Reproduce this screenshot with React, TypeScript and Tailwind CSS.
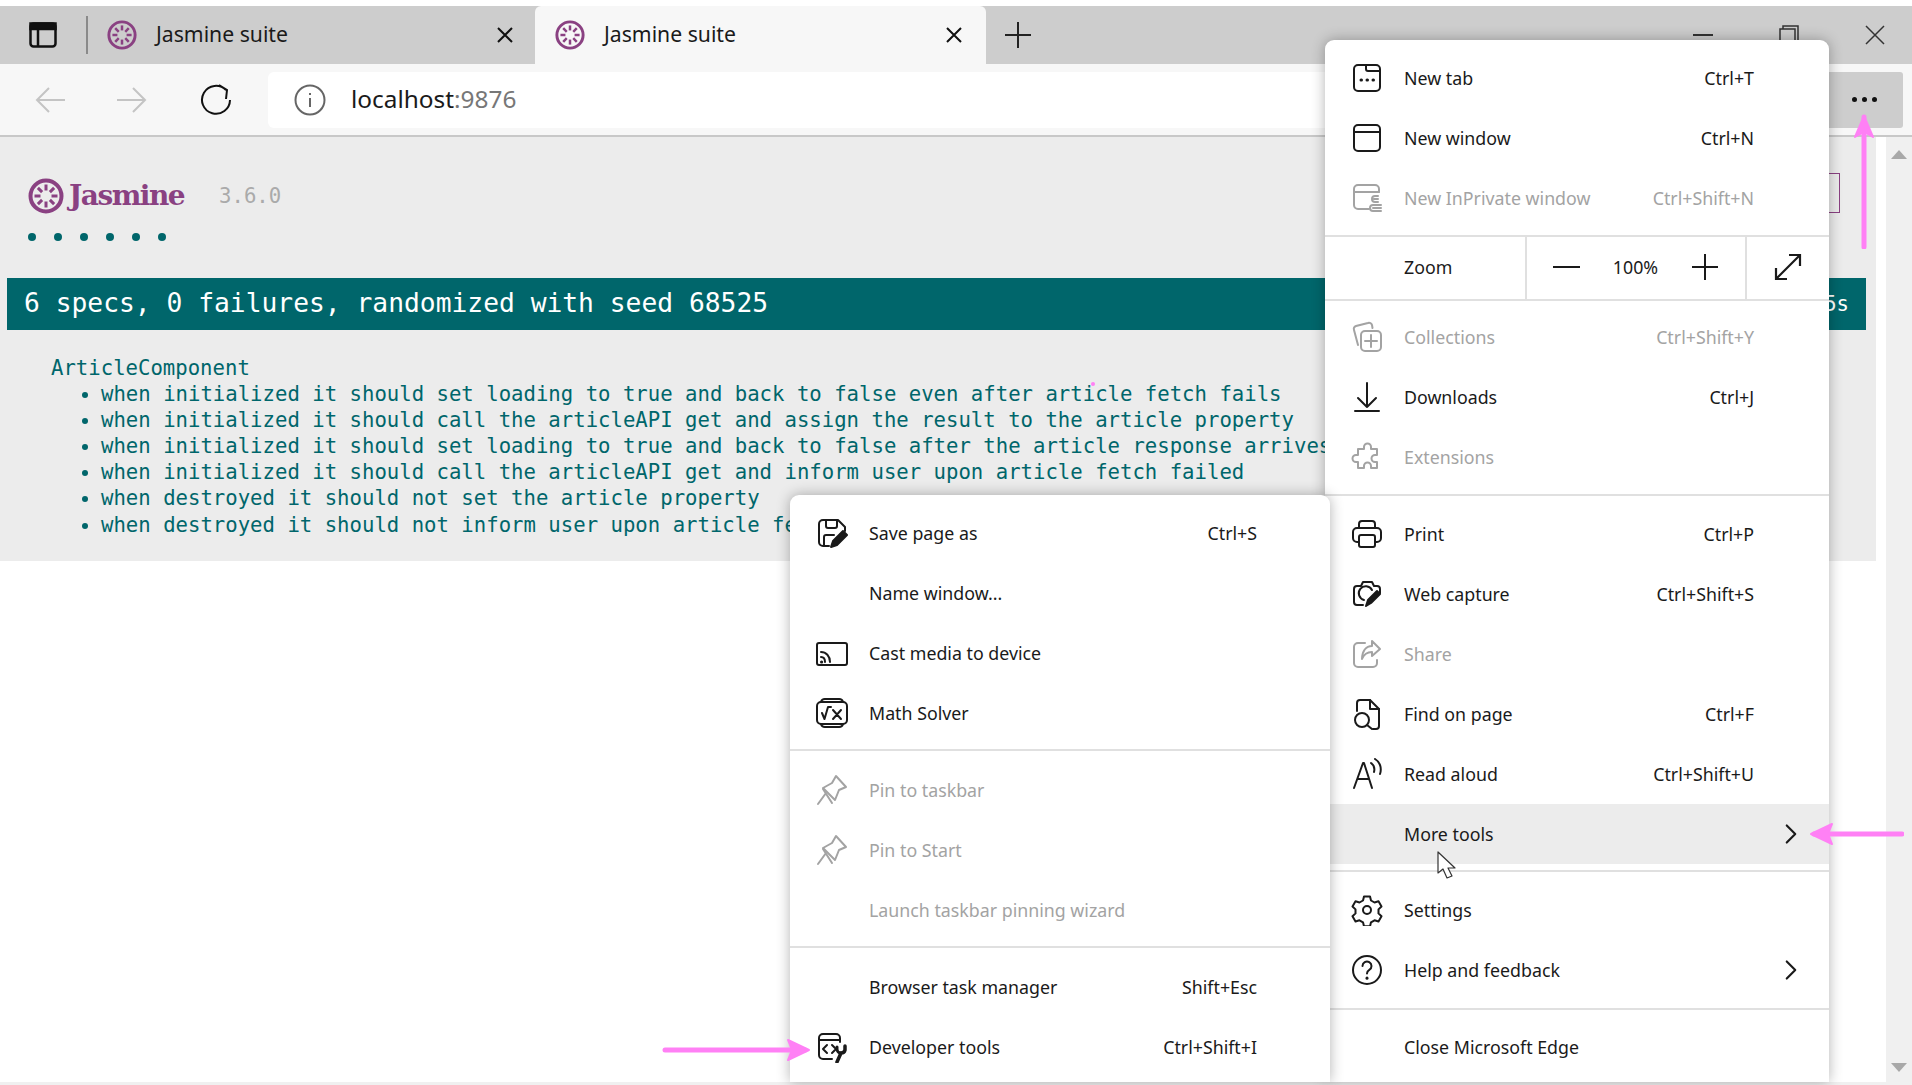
import type { ReactNode } from 'react';
import { ChevronRight } from 'lucide-react';

const mono = "font-['DejaVu_Sans_Mono',monospace]";
const ui = "font-['Noto_Sans',sans-serif]";

const specs = [
  'when initialized it should set loading to true and back to false even after article fetch fails',
  'when initialized it should call the articleAPI get and assign the result to the article property',
  'when initialized it should set loading to true and back to false after the article response arrives',
  'when initialized it should call the articleAPI get and inform user upon article fetch failed',
  'when destroyed it should not set the article property',
  'when destroyed it should not inform user upon article fetch failed',
];

function Ic({ children, w = 2 }: { children: ReactNode; w?: number }) {
  return (
    <svg width="32" height="32" viewBox="0 0 32 32" fill="none" stroke="currentColor" strokeWidth={w} strokeLinecap="round" strokeLinejoin="round">
      {children}
    </svg>
  );
}

// Jasmine flower mark, used in tabs and page header
function Flower({ size, ring = 3 }: { size: number; ring?: number }) {
  const petals = [0, 45, 90, 135, 180, 225, 270, 315];
  return (
    <svg width={size} height={size} viewBox="0 0 36 36" fill="none" stroke="#8a4182">
      <circle cx="18" cy="18" r={18 - ring / 2 - 0.5} strokeWidth={ring} />
      {petals.map((a) => (
        <path key={a} d="M18 12.5V6.5" strokeWidth="3" transform={`rotate(${a} 18 18)`} />
      ))}
    </svg>
  );
}

const icons: Record<string, ReactNode> = {
  newTab: (
    <Ic>
      <rect x="3" y="3" width="26" height="26" rx="4" />
      <path d="M15 3v4a2 2 0 0 0 2 2h12" />
      <path d="M10 18h.5M16 18h.5M22 18h.5" strokeWidth="3" />
    </Ic>
  ),
  newWindow: (
    <Ic>
      <rect x="3" y="3" width="26" height="26" rx="4" />
      <path d="M3 10h26" />
    </Ic>
  ),
  inPrivate: (
    <Ic>
      <path d="M18 27H7a4 4 0 0 1-4-4V7a4 4 0 0 1 4-4h17a4 4 0 0 1 4 4v3" />
      <path d="M3 10h25" />
      <path d="M27 14h-3a3 3 0 0 0 0 6h3M23 17h4" />
      <path d="M30 23h-8a3 3 0 0 0 0 6h8M22 26h8" />
    </Ic>
  ),
  collections: (
    <Ic>
      <path d="M7 24 3 9a3 3 0 0 1 2-4l12-3a3 3 0 0 1 4 2l.5 3" />
      <rect x="10" y="10" width="20" height="20" rx="4" />
      <path d="M20 14v12M14 20h12" />
    </Ic>
  ),
  downloads: (
    <Ic>
      <path d="M16 2v24M7 17l9 9 9-9M4 30h24" />
    </Ic>
  ),
  extensions: (
    <Ic>
      <path d="M13 6a3.5 3.5 0 0 1 7 0v2h6v6h-2a3.5 3.5 0 0 0 0 7h2v6h-6v-2a3.5 3.5 0 0 0-7 0v2H7v-6H5a3.5 3.5 0 0 1 0-7h2V8h6z" />
    </Ic>
  ),
  print: (
    <Ic>
      <path d="M8 10V6a3 3 0 0 1 3-3h10a3 3 0 0 1 3 3v4" />
      <path d="M8 24H6a4 4 0 0 1-4-4v-6a4 4 0 0 1 4-4h20a4 4 0 0 1 4 4v6a4 4 0 0 1-4 4h-2" />
      <rect x="8" y="17" width="16" height="12" rx="2" />
    </Ic>
  ),
  capture: (
    <Ic>
      <path d="M12 27H6a3 3 0 0 1-3-3V11a3 3 0 0 1 3-3h4l2-4h9l2 4h3a3 3 0 0 1 3 3v4" />
      <path d="M21 12a7 7 0 1 0-8 10" />
      <path d="m15 28 2-6 9-9 3 3-9 9z" fill="currentColor" />
    </Ic>
  ),
  share: (
    <Ic>
      <path d="M14 5H7a4 4 0 0 0-4 4v16a4 4 0 0 0 4 4h15a4 4 0 0 0 4-4v-3" />
      <path d="M21 3l8 8-8 7v-4c-5 0-8 2-10 7 0-8 4-13 10-13z" />
    </Ic>
  ),
  find: (
    <Ic>
      <path d="M6 13V5a3 3 0 0 1 3-3h10l9 9v17a3 3 0 0 1-3 3h-3" />
      <path d="M19 2v9h9" />
      <circle cx="11" cy="22" r="7" />
      <path d="m16 27 5 4" />
    </Ic>
  ),
  read: (
    <Ic>
      <path d="M3 30 12 5h1l8 25M6.5 21h11" />
      <path d="M20 5c3 2 4 5 3 9M24 1c5 3 7 9 5 15" />
    </Ic>
  ),
  settings: (
    <Ic>
      <path d="m13 2.5h6l1 4 3.5 2 4-1.2 3 5.2-3 2.9v4l3 2.9-3 5.2-4-1.2-3.5 2-1 4h-6l-1-4-3.5-2-4 1.2-3-5.2 3-2.9v-4l-3-2.9 3-5.2 4 1.2 3.5-2z" />
      <circle cx="16" cy="16" r="4" />
    </Ic>
  ),
  help: (
    <Ic>
      <circle cx="16" cy="16" r="14" />
      <path d="M11.5 12a4.5 4.5 0 1 1 6.8 3.900c-1.5.9-2.300 1.800-2.300 3.600" />
      <path d="M16 24v.2" strokeWidth="3" />
    </Ic>
  ),
  save: (
    <Ic>
      <path d="M13 29H7a4 4 0 0 1-4-4V7a4 4 0 0 1 4-4h15l7 7v4" />
      <path d="M10 3v6a2 2 0 0 0 2 2h7a2 2 0 0 0 2-2V3" />
      <path d="M8 29V20a2 2 0 0 1 2-2h8" />
      <path d="m15 30 2-6 10-10 4 4-10 10z" fill="currentColor" />
    </Ic>
  ),
  cast: (
    <Ic>
      <rect x="1" y="6" width="30" height="22" rx="2" />
      <path d="M5 15c5 0 9 4 9 10M5 20c2.5 0 4 2 4 5" />
      <path d="M5.5 25h.2" strokeWidth="3" />
    </Ic>
  ),
  math: (
    <Ic>
      <rect x="1" y="5" width="30" height="22" rx="4" />
      <path d="M5 5a4 4 0 0 1 4-3h14a4 4 0 0 1 4 3M5 27a4 4 0 0 0 4 3h14a4 4 0 0 0 4-3" />
      <path d="m6 16 2.5 6L12 10h3M17 13l8 9M25 13l-8 9" />
    </Ic>
  ),
  pin: (
    <Ic>
      <path d="M20 2 30 13l-7 3-4 10-6-6-6-6 9-5z" />
      <path d="m10 19-8 11M7 15l9 14" />
    </Ic>
  ),
  devtools: (
    <Ic>
      <path d="M16 28H7a4 4 0 0 1-4-4V7a4 4 0 0 1 4-4h13a4 4 0 0 1 4 4v4" />
      <path d="M3 9h21" />
      <path d="m11 14-4 4 4 4M16 14l4 4-4 4" />
      <path d="M29 15v4a4 4 0 0 1-4 3l-4 9" strokeWidth="3.5" />
      <path d="M21 16v2a4 4 0 0 0 4 4" strokeWidth="3" />
    </Ic>
  ),
};

type Item = { label: string; key?: string; icon?: string; off?: boolean; more?: boolean; active?: boolean };

function MenuRow({ item, rightPad }: { item: Item; rightPad: string }) {
  return (
    <div className={`flex h-[60px] items-center pl-[26px] ${rightPad} ${item.off ? 'text-[#a3a3a3]' : 'text-[#1a1a1a]'} ${item.active ? 'bg-[#ececec]' : ''}`}>
      <span className="flex w-[32px] shrink-0 justify-center">{item.icon ? icons[item.icon] : null}</span>
      <span className="ml-[21px] flex-1">{item.label}</span>
      {item.key && <span>{item.key}</span>}
      {item.more && <ChevronRight size={34} strokeWidth={1.5} className="text-[#1a1a1a]" />}
    </div>
  );
}

function Divider({ className = '' }: { className?: string }) {
  return <div className={`h-[2px] bg-[#e0e0e0] ${className}`} />;
}

function Group({ items, className = '', sub = false }: { items: Item[]; className?: string; sub?: boolean }) {
  return (
    <div className={className}>
      {items.map((it) => (
        <MenuRow key={it.label} item={it} rightPad={it.more ? 'pr-[21px]' : sub ? 'pr-[73px]' : 'pr-[75px]'} />
      ))}
    </div>
  );
}

function MainMenu() {
  return (
    <div className={`absolute left-[1325px] top-[40px] h-[1042px] w-[504px] rounded-t-[9px] bg-white text-[17.8px] shadow-[0_0_14px_rgba(0,0,0,0.3)] ${ui}`}>
      <Group
        className="pt-[8px] pb-[7px]"
        items={[
          { label: 'New tab', key: 'Ctrl+T', icon: 'newTab' },
          { label: 'New window', key: 'Ctrl+N', icon: 'newWindow' },
          { label: 'New InPrivate window', key: 'Ctrl+Shift+N', icon: 'inPrivate', off: true },
        ]}
      />
      <Divider />
      <div className="flex h-[62px] items-center pb-[2px] text-[#1a1a1a]">
        <span className="w-[200px] pl-[79px]">Zoom</span>
        <div className="-mb-[2px] flex h-[62px] w-[222px] items-center justify-between border-x-2 border-[#e0e0e0] px-[26px] pb-[2px]">
          <span className="h-[2px] w-[27px] bg-[#1a1a1a]" />
          <span>100%</span>
          <svg width="28" height="28" viewBox="0 0 28 28" stroke="#1a1a1a" strokeWidth="2"><path d="M14 1v26M1 14h26" /></svg>
        </div>
        <div className="flex flex-1 justify-center">
          <svg width="30" height="30" viewBox="0 0 30 30" fill="none" stroke="#1a1a1a" strokeWidth="2.2"><path d="M3 27 27 3M16 3h11v11M3 16v11h11" /></svg>
        </div>
      </div>
      <Divider />
      <Group
        className="pt-[6px] pb-[7px]"
        items={[
          { label: 'Collections', key: 'Ctrl+Shift+Y', icon: 'collections', off: true },
          { label: 'Downloads', key: 'Ctrl+J', icon: 'downloads' },
          { label: 'Extensions', icon: 'extensions', off: true },
        ]}
      />
      <Divider />
      <Group
        className="pt-[8px] pb-[6px]"
        items={[
          { label: 'Print', key: 'Ctrl+P', icon: 'print' },
          { label: 'Web capture', key: 'Ctrl+Shift+S', icon: 'capture' },
          { label: 'Share', icon: 'share', off: true },
          { label: 'Find on page', key: 'Ctrl+F', icon: 'find' },
          { label: 'Read aloud', key: 'Ctrl+Shift+U', icon: 'read' },
          { label: 'More tools', more: true, active: true },
        ]}
      />
      <Divider />
      <Group
        className="pt-[8px] pb-[8px]"
        items={[
          { label: 'Settings', icon: 'settings' },
          { label: 'Help and feedback', icon: 'help', more: true },
        ]}
      />
      <Divider />
      <Group className="pt-[7px]" items={[{ label: 'Close Microsoft Edge' }]} />
    </div>
  );
}

function SubMenu() {
  return (
    <div className={`absolute left-[790px] top-[495px] h-[587px] w-[540px] rounded-t-[9px] bg-white text-[17.8px] shadow-[0_0_14px_rgba(0,0,0,0.3)] ${ui}`}>
      <Group
        sub
        className="pt-[8px] pb-[6px]"
        items={[
          { label: 'Save page as', key: 'Ctrl+S', icon: 'save' },
          { label: 'Name window...' },
          { label: 'Cast media to device', icon: 'cast' },
          { label: 'Math Solver', icon: 'math' },
        ]}
      />
      <Divider />
      <Group
        sub
        className="pt-[9px] pb-[6px]"
        items={[
          { label: 'Pin to taskbar', icon: 'pin', off: true },
          { label: 'Pin to Start', icon: 'pin', off: true },
          { label: 'Launch taskbar pinning wizard', off: true },
        ]}
      />
      <Divider />
      <Group
        sub
        className="pt-[9px]"
        items={[
          { label: 'Browser task manager', key: 'Shift+Esc' },
          { label: 'Developer tools', key: 'Ctrl+Shift+I', icon: 'devtools' },
        ]}
      />
    </div>
  );
}

function Tab({ active = false }: { active?: boolean }) {
  return (
    <div className={`flex h-full items-center ${active ? 'w-[451px] rounded-t-[6px] bg-[#f7f7f7] pl-[20px] pr-[24px]' : 'w-[447px] pl-[19px] pr-[22px]'}`}>
      <Flower size={30} ring={3.5} />
      <span className={`ml-[19px] flex-1 pb-[2px] text-[21.2px] text-[#1a1a1a] ${ui}`}>Jasmine suite</span>
      <svg width="16" height="16" viewBox="0 0 16 16" stroke="#111" strokeWidth="2"><path d="m1 1 14 14M15 1 1 15" /></svg>
    </div>
  );
}

function TitleBar() {
  return (
    <div className="mt-[6px] flex h-[58px] items-center bg-[#cdcdcd]">
      <svg className="ml-[29px]" width="28" height="26" viewBox="0 0 28 26" fill="none" stroke="#111" strokeWidth="2.5">
        <rect x="1.5" y="1.5" width="25" height="23" rx="3" />
        <path d="M1.5 7h25V1.5h-25zM9 7v17" />
        <path d="M2 4h24" strokeWidth="5" />
      </svg>
      <span className="ml-[29px] h-[38px] w-[2px] bg-[#8a8a8a]" />
      <div className="flex h-full items-stretch">
        <Tab />
        <Tab active />
      </div>
      <svg className="ml-[18px]" width="28" height="28" viewBox="0 0 28 28" stroke="#222" strokeWidth="2"><path d="M14 1v26M1 14h26" /></svg>
      <div className="ml-auto flex items-center gap-[66px] pr-[27px]">
        <span className="mb-[1px] h-[2px] w-[20px] bg-[#333]" />
        <svg width="20" height="20" viewBox="0 0 20 20" fill="none" stroke="#333" strokeWidth="1.5"><path d="M1 4h15v16H1zM4 4V1h15v15h-3" /></svg>
        <svg width="20" height="20" viewBox="0 0 20 20" stroke="#333" strokeWidth="1.5"><path d="m1 1 18 18M19 1 1 19" /></svg>
      </div>
    </div>
  );
}

function Toolbar() {
  return (
    <div className="flex h-[73px] items-center border-b-2 border-[#c8c8c8] bg-[#f7f7f7]">
      <svg className="ml-[35px]" width="30" height="28" viewBox="0 0 30 28" fill="none" stroke="#c4c4c4" strokeWidth="2"><path d="M30 14H2M14 2 2 14l12 12" /></svg>
      <svg className="ml-[52px]" width="30" height="28" viewBox="0 0 30 28" fill="none" stroke="#c4c4c4" strokeWidth="2"><path d="M0 14h28M16 2l12 12-12 12" /></svg>
      <svg className="ml-[53px]" width="32" height="32" viewBox="0 0 32 32" fill="none" stroke="#111" strokeWidth="2"><path d="M26 6a14 14 0 1 0 4 10M19 1l8 5-1 9" /></svg>
      <div className="ml-[36px] flex h-[56px] w-[1060px] items-center rounded-l-[6px] bg-white pl-[26px]">
        <svg width="32" height="32" viewBox="0 0 32 32" fill="none" stroke="#666" strokeWidth="2"><circle cx="16" cy="16" r="14.5" /><path d="M16 14v9M16 9v2" /></svg>
        <span className={`ml-[25px] text-[24.4px] text-[#1a1a1a] ${ui}`}>
          localhost<span className="text-[#777]">:9876</span>
        </span>
      </div>
      <div className="ml-auto mr-[9px] flex h-[56px] w-[150px] items-center justify-end gap-[5px] rounded-[3px] bg-[#cdcdcd] pr-[26px]">
        <span className="h-[5px] w-[5px] rounded-full bg-[#111]" />
        <span className="h-[5px] w-[5px] rounded-full bg-[#111]" />
        <span className="h-[5px] w-[5px] rounded-full bg-[#111]" />
      </div>
    </div>
  );
}

function JasminePage() {
  return (
    <div className={`w-[1876px] shrink-0 bg-[#ececec] text-[#00666b] ${mono}`}>
      <div className="flex h-[118px] flex-col pl-[28px] pt-[40px]">
        <div className="flex h-[38px] items-center">
          <Flower size={36} ring={4} />
          <span className="ml-[5px] font-['DejaVu_Serif',serif] text-[28px] font-bold tracking-[-1.5px] text-[#8a4182]">Jasmine</span>
          <span className="ml-[35px] text-[20.65px] text-[#aaaaaa]">3.6.0</span>
        </div>
        <div className="mt-[18px] flex gap-[18px]">
          {specs.map((s) => (
            <span key={s} className="h-[8px] w-[8px] rounded-full bg-[#00666b]" />
          ))}
        </div>
      </div>
      <div className="mt-[23px] ml-[7px] flex h-[52px] w-[1859px] items-center justify-between bg-[#00666b] pl-[17px] pr-[17px] text-[26.3px] text-white">
        <span>6 specs, 0 failures, randomized with seed 68525</span>
        <span className="text-[20.6px]">finished in 0.05s</span>
      </div>
      <div className="h-[231px] whitespace-nowrap pl-[51px] pt-[25px] text-[20.65px] leading-[26.1px]">
        <div>ArticleComponent</div>
        <ul className="pl-[50px]">
          {specs.map((s) => (
            <li key={s} className="list-disc">{s}</li>
          ))}
        </ul>
      </div>
    </div>
  );
}

function Scrollbar() {
  return (
    <div className="ml-[10px] flex w-[26px] flex-col items-center justify-between bg-[#f0f0f0] pt-[13px] pb-[10px]">
      <svg width="16" height="9" viewBox="0 0 16 9" fill="#a8a8a8"><path d="M8 0l8 9H0z" /></svg>
      <svg width="16" height="9" viewBox="0 0 16 9" fill="#a8a8a8"><path d="M0 0h16L8 9z" /></svg>
    </div>
  );
}

// Pink annotation arrows and mouse pointer, drawn over the screenshot
function Overlays() {
  return (
    <>
      <svg className="absolute left-[1852px] top-[113px]" width="24" height="136" viewBox="0 0 24 136" fill="#ff80f5" stroke="#ff80f5" strokeLinecap="round" strokeLinejoin="round">
        <path d="M12 4v130" strokeWidth="5" />
        <path d="M12 3 3 24l9-5 9 5z" strokeWidth="2" />
      </svg>
      <svg className="absolute left-[1808px] top-[822px]" width="96" height="24" viewBox="0 0 96 24" fill="#ff80f5" stroke="#ff80f5" strokeLinecap="round" strokeLinejoin="round">
        <path d="M6 12h88" strokeWidth="5" />
        <path d="M3 12 24 2l-4 10 4 10z" strokeWidth="2" />
      </svg>
      <svg className="absolute left-[662px] top-[1038px]" width="150" height="24" viewBox="0 0 150 24" fill="#ff80f5" stroke="#ff80f5" strokeLinecap="round" strokeLinejoin="round">
        <path d="M3 12h140" strokeWidth="5" />
        <path d="M147 12 126 2l4 10-4 10z" strokeWidth="2" />
      </svg>
      <svg className="absolute left-[1437px] top-[851px]" width="20" height="29" viewBox="0 0 20 29" fill="#fff" stroke="#333" strokeWidth="1.2" strokeLinejoin="round">
        <path d="M1 1v21l5-4 4 9 5-2-4-8h7z" />
      </svg>
    </>
  );
}

export default function App() {
  return (
    <div className="relative flex h-[1085px] w-[1912px] flex-col overflow-hidden bg-white">
      <TitleBar />
      <Toolbar />
      <div className="flex h-[945px]">
        <div>
          <JasminePage />
        </div>
        <Scrollbar />
      </div>
      <div className="h-[3px] bg-[#f0f0f0]" />
      <span className="absolute left-[1091px] top-[382px] h-[4px] w-[4px] rounded-full bg-[#ff80f5]" />
      <div className="absolute left-[1700px] top-[173px] h-[40px] w-[140px] border border-[#8a4182]" />
      <MainMenu />
      <SubMenu />
      <Overlays />
    </div>
  );
}
